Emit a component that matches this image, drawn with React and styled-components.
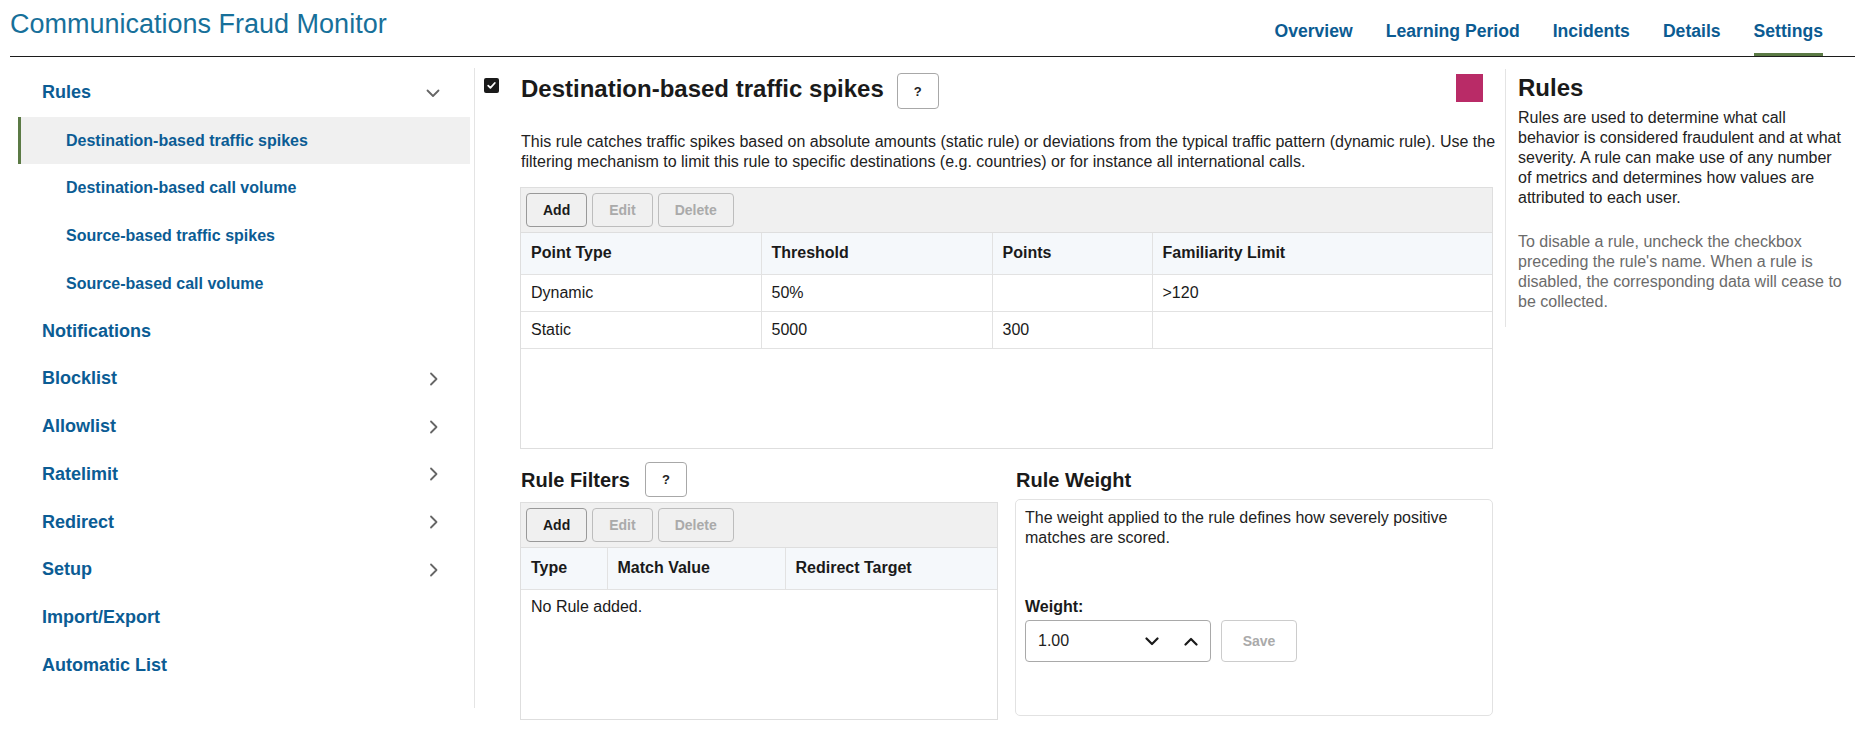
import React from 'react';
import styled, { createGlobalStyle } from 'styled-components';

const GlobalStyle = createGlobalStyle`
  html, body { margin: 0; padding: 0; background: #ffffff; }
  body {
    font-family: "Liberation Sans", Arial, Helvetica, sans-serif;
    color: #222222;
  }
  * { box-sizing: border-box; }
`;

const Page = styled.div`
  width: 1876px;
  padding: 0 21px 0 10px;
`;

const Header = styled.header`
  display: flex;
  justify-content: space-between;
  align-items: flex-start;
  height: 57px;
  border-bottom: 1px solid #1c1c1c;
`;

const Title = styled.h1`
  margin: 0;
  padding-top: 8px;
  font-size: 27px;
  line-height: 32px;
  font-weight: 400;
  color: #17709a;
`;

const Tabs = styled.nav`
  display: flex;
  align-self: stretch;
  gap: 33px;
  padding-right: 32px;
`;

const Tab = styled.a`
  display: block;
  padding: 20px 0 11px;
  line-height: 22px;
  font-size: 17.6px;
  font-weight: 700;
  color: #0b5b92;
  text-decoration: none;
  border-bottom: 3px solid ${(p) => (p.$active ? '#5b7a45' : 'transparent')};
`;

const Body = styled.div`
  display: flex;
  align-items: flex-start;
`;

const Sidebar = styled.aside`
  flex: none;
  width: 465px;
  margin-top: 11px;
  padding: 1px 4px 19px 8px;
  border-right: 1px solid #e4e4e4;
`;

const NavItem = styled.a`
  display: flex;
  align-items: center;
  justify-content: space-between;
  height: 47.7px;
  padding: 0 30px 0 ${(p) => (p.$sub ? 45 : 21)}px;
  border-left: 3px solid ${(p) => (p.$active ? '#5b7a45' : 'transparent')};
  background: ${(p) => (p.$active ? '#f0f0f0' : 'transparent')};
  font-size: ${(p) => (p.$sub ? 16 : 18)}px;
  font-weight: 700;
  color: #0b5c94;
  text-decoration: none;
`;

const NavIcon = styled.svg`
  width: 14px;
  height: 14px;
  flex: none;
  fill: none;
  stroke: #666666;
  stroke-width: 1.8;
  stroke-linecap: round;
  stroke-linejoin: round;
`;

const Main = styled.main`
  flex: 1;
  display: flex;
  align-items: flex-start;
  padding: 12px 0 0 9px;
`;

const CheckCol = styled.div`
  flex: none;
  margin: 9px 21px 0 0;
`;

const CheckBox = styled.span`
  display: flex;
  align-items: center;
  justify-content: center;
  width: 15px;
  height: 15px;
  border-radius: 2px;
  background: #1a1a1a;
`;

const Content = styled.section`
  flex: none;
  width: 985px;
  padding-top: 4px;
`;

const HeadRow = styled.div`
  display: flex;
  align-items: flex-start;
  padding-right: 22px;
`;

const H2 = styled.h2`
  margin: 0;
  padding-left: 1px;
  font-size: 24px;
  line-height: 32px;
  font-weight: 700;
  color: #1a1a1a;
`;

const HelpButton = styled.button`
  flex: none;
  margin-left: ${(p) => p.$gap}px;
  width: 42px;
  height: ${(p) => p.$h}px;
  padding: 0;
  border: 1px solid #a8a8a8;
  border-radius: 4px;
  background: #ffffff;
  font-family: inherit;
  font-size: 13px;
  font-weight: 700;
  color: #222222;
`;

const Swatch = styled.div`
  margin: 1px 0 0 auto;
  width: 27px;
  height: 28px;
  background: #b92b67;
`;

const Description = styled.p`
  margin: 23px 0 0;
  padding-left: 1px;
  font-size: 16px;
  line-height: 20px;
  color: #222222;
`;

const Grid = styled.div`
  margin: 15px 12px 0 0;
  height: 262px;
  border: 1px solid #dedede;
`;

const Toolbar = styled.div`
  display: flex;
  gap: 5px;
  height: 45px;
  padding: 5px 5px 0;
  background: #f0f0f0;
  border-bottom: 1px solid #dedede;
`;

const ToolButton = styled.button`
  height: 34px;
  min-width: 60px;
  padding: 0 16px;
  border: 1px solid ${(p) => (p.disabled ? '#bdbdbd' : '#999999')};
  border-radius: 4px;
  background: #f0f0f0;
  font-family: inherit;
  font-size: 14px;
  font-weight: 700;
  color: ${(p) => (p.disabled ? '#aaaaaa' : '#1a1a1a')};
`;

const Table = styled.table`
  width: 100%;
  border-collapse: collapse;
  table-layout: fixed;
`;

const Th = styled.th`
  height: 41px;
  padding: 0 10px;
  text-align: left;
  font-size: 16px;
  font-weight: 700;
  color: #1a1a1a;
  background: #f5f8fb;
  border-bottom: 1px solid #e2e2e2;
  border-right: 1px solid #e2e2e2;
  &:last-child { border-right: none; }
`;

const Td = styled.td`
  height: 37px;
  padding: 0 10px;
  font-size: 16px;
  color: #1a1a1a;
  border-bottom: 1px solid #e2e2e2;
  border-right: 1px solid #e2e2e2;
  &:last-child { border-right: none; }
`;

const EmptyCell = styled.td`
  padding: 7px 10px 0;
  vertical-align: top;
  font-size: 16px;
  line-height: 20px;
  color: #1a1a1a;
`;

const Split = styled.div`
  display: grid;
  grid-template-columns: 478px 478px;
  column-gap: 17px;
  margin: 13px 12px 0 0;
`;

const SubHeadRow = styled.div`
  display: flex;
  align-items: center;
  height: 35px;
`;

const H3 = styled.h3`
  margin: 0;
  padding-left: 1px;
  font-size: 20px;
  line-height: 24px;
  font-weight: 700;
  color: #1a1a1a;
`;

const FilterBox = styled.div`
  margin-top: 5px;
  height: 218px;
  border: 1px solid #dedede;
`;

const WeightBox = styled.div`
  margin-top: 2px;
  height: 217px;
  padding: 8px 9px;
  border: 1px solid #e2e2e2;
  border-radius: 5px;
`;

const WeightText = styled.p`
  margin: 0;
  font-size: 16px;
  line-height: 20px;
  color: #222222;
`;

const Label = styled.div`
  margin-top: 49px;
  font-size: 16px;
  line-height: 20px;
  font-weight: 700;
  color: #1a1a1a;
`;

const FieldRow = styled.div`
  display: flex;
  gap: 10px;
  margin-top: 3px;
`;

const Stepper = styled.div`
  display: flex;
  align-items: center;
  width: 186px;
  height: 42px;
  padding: 0 12px 0 12px;
  border: 1px solid #a9a9a9;
  border-radius: 4px;
  font-size: 16px;
  color: #222222;
`;

const StepIcons = styled.div`
  display: flex;
  align-items: center;
  gap: 25px;
  margin-left: auto;
`;

const StepIcon = styled.svg`
  width: 14px;
  height: 9px;
  fill: none;
  stroke: #1a1a1a;
  stroke-width: 2.2;
  stroke-linecap: round;
  stroke-linejoin: round;
`;

const SaveButton = styled.button`
  width: 76px;
  height: 42px;
  border: 1px solid #cccccc;
  border-radius: 4px;
  background: #ffffff;
  font-family: inherit;
  font-size: 14px;
  font-weight: 700;
  color: #aaaaaa;
`;

const Aside = styled.aside`
  flex: none;
  width: 350px;
  padding: 5px 10px 15px 12px;
  border-left: 1px solid #e4e4e4;
`;

const AsideTitle = styled.h2`
  margin: 0;
  font-size: 24px;
  line-height: 28px;
  font-weight: 700;
  color: #1a1a1a;
`;

const AsideText = styled.p`
  margin: ${(p) => (p.$muted ? '24px' : '6px')} 0 0;
  font-size: 16px;
  line-height: 20px;
  color: ${(p) => (p.$muted ? '#6b6b6b' : '#222222')};
`;

const ChevronRight = () => (
  <NavIcon viewBox="0 0 14 14">
    <path d="M5 1.5 L10.5 7 L5 12.5" />
  </NavIcon>
);

const ChevronDown = () => (
  <NavIcon viewBox="0 0 14 14">
    <path d="M1.5 4.5 L7 10 L12.5 4.5" />
  </NavIcon>
);

const navItems = [
  { label: 'Rules', icon: 'down' },
  { label: 'Destination-based traffic spikes', sub: true, active: true },
  { label: 'Destination-based call volume', sub: true },
  { label: 'Source-based traffic spikes', sub: true },
  { label: 'Source-based call volume', sub: true },
  { label: 'Notifications' },
  { label: 'Blocklist', icon: 'right' },
  { label: 'Allowlist', icon: 'right' },
  { label: 'Ratelimit', icon: 'right' },
  { label: 'Redirect', icon: 'right' },
  { label: 'Setup', icon: 'right' },
  { label: 'Import/Export' },
  { label: 'Automatic List' },
];

const tabs = ['Overview', 'Learning Period', 'Incidents', 'Details', 'Settings'];

const pointRows = [
  ['Dynamic', '50%', '', '>120'],
  ['Static', '5000', '300', ''],
];

const ToolbarButtons = () => (
  <Toolbar>
    <ToolButton>Add</ToolButton>
    <ToolButton disabled>Edit</ToolButton>
    <ToolButton disabled>Delete</ToolButton>
  </Toolbar>
);

export default function App() {
  return (
    <Page>
      <GlobalStyle />
      <Header>
        <Title>Communications Fraud Monitor</Title>
        <Tabs>
          {tabs.map((t) => (
            <Tab key={t} href="#" $active={t === 'Settings'}>
              {t}
            </Tab>
          ))}
        </Tabs>
      </Header>

      <Body>
        <Sidebar>
          {navItems.map((n) => (
            <NavItem key={n.label} href="#" $sub={n.sub} $active={n.active}>
              <span>{n.label}</span>
              {n.icon === 'down' && <ChevronDown />}
              {n.icon === 'right' && <ChevronRight />}
            </NavItem>
          ))}
        </Sidebar>

        <Main>
          <CheckCol>
            <CheckBox>
              <svg width="11" height="11" viewBox="0 0 11 11">
                <path
                  d="M2.2 5.6 L4.4 7.8 L8.8 3"
                  fill="none"
                  stroke="#ffffff"
                  strokeWidth="1.8"
                  strokeLinecap="round"
                  strokeLinejoin="round"
                />
              </svg>
            </CheckBox>
          </CheckCol>

          <Content>
            <HeadRow>
              <H2>Destination-based traffic spikes</H2>
              <HelpButton $gap={13} $h={36}>?</HelpButton>
              <Swatch />
            </HeadRow>
            <Description>
              This rule catches traffic spikes based on absolute amounts (static rule) or deviations from the
              typical traffic pattern (dynamic rule). Use the filtering mechanism to limit this rule to specific
              destinations (e.g. countries) or for instance all international calls.
            </Description>

            <Grid>
              <ToolbarButtons />
              <Table>
                <colgroup>
                  <col style={{ width: 240 }} />
                  <col style={{ width: 231 }} />
                  <col style={{ width: 160 }} />
                  <col />
                </colgroup>
                <thead>
                  <tr>
                    <Th>Point Type</Th>
                    <Th>Threshold</Th>
                    <Th>Points</Th>
                    <Th>Familiarity Limit</Th>
                  </tr>
                </thead>
                <tbody>
                  {pointRows.map((r) => (
                    <tr key={r[0]}>
                      {r.map((c, i) => (
                        <Td key={i}>{c}</Td>
                      ))}
                    </tr>
                  ))}
                </tbody>
              </Table>
            </Grid>

            <Split>
              <div>
                <SubHeadRow>
                  <H3>Rule Filters</H3>
                  <HelpButton $gap={15} $h={35}>?</HelpButton>
                </SubHeadRow>
                <FilterBox>
                  <ToolbarButtons />
                  <Table>
                    <colgroup>
                      <col style={{ width: 86 }} />
                      <col style={{ width: 178 }} />
                      <col />
                    </colgroup>
                    <thead>
                      <tr>
                        <Th>Type</Th>
                        <Th>Match Value</Th>
                        <Th>Redirect Target</Th>
                      </tr>
                    </thead>
                    <tbody>
                      <tr>
                        <EmptyCell colSpan={3}>No Rule added.</EmptyCell>
                      </tr>
                    </tbody>
                  </Table>
                </FilterBox>
              </div>

              <div>
                <SubHeadRow>
                  <H3>Rule Weight</H3>
                </SubHeadRow>
                <WeightBox>
                  <WeightText>
                    The weight applied to the rule defines how severely positive matches are scored.
                  </WeightText>
                  <Label>Weight:</Label>
                  <FieldRow>
                    <Stepper>
                      <span>1.00</span>
                      <StepIcons>
                        <StepIcon viewBox="0 0 14 9">
                          <path d="M1.5 1.5 L7 7 L12.5 1.5" />
                        </StepIcon>
                        <StepIcon viewBox="0 0 14 9">
                          <path d="M1.5 7.5 L7 2 L12.5 7.5" />
                        </StepIcon>
                      </StepIcons>
                    </Stepper>
                    <SaveButton disabled>Save</SaveButton>
                  </FieldRow>
                </WeightBox>
              </div>
            </Split>
          </Content>

          <Aside>
            <AsideTitle>Rules</AsideTitle>
            <AsideText>
              Rules are used to determine what call behavior is considered fraudulent and at what severity. A rule
              can make use of any number of metrics and determines how values are attributed to each user.
            </AsideText>
            <AsideText $muted>
              To disable a rule, uncheck the checkbox preceding the rule's name. When a rule is disabled, the
              corresponding data will cease to be collected.
            </AsideText>
          </Aside>
        </Main>
      </Body>
    </Page>
  );
}
